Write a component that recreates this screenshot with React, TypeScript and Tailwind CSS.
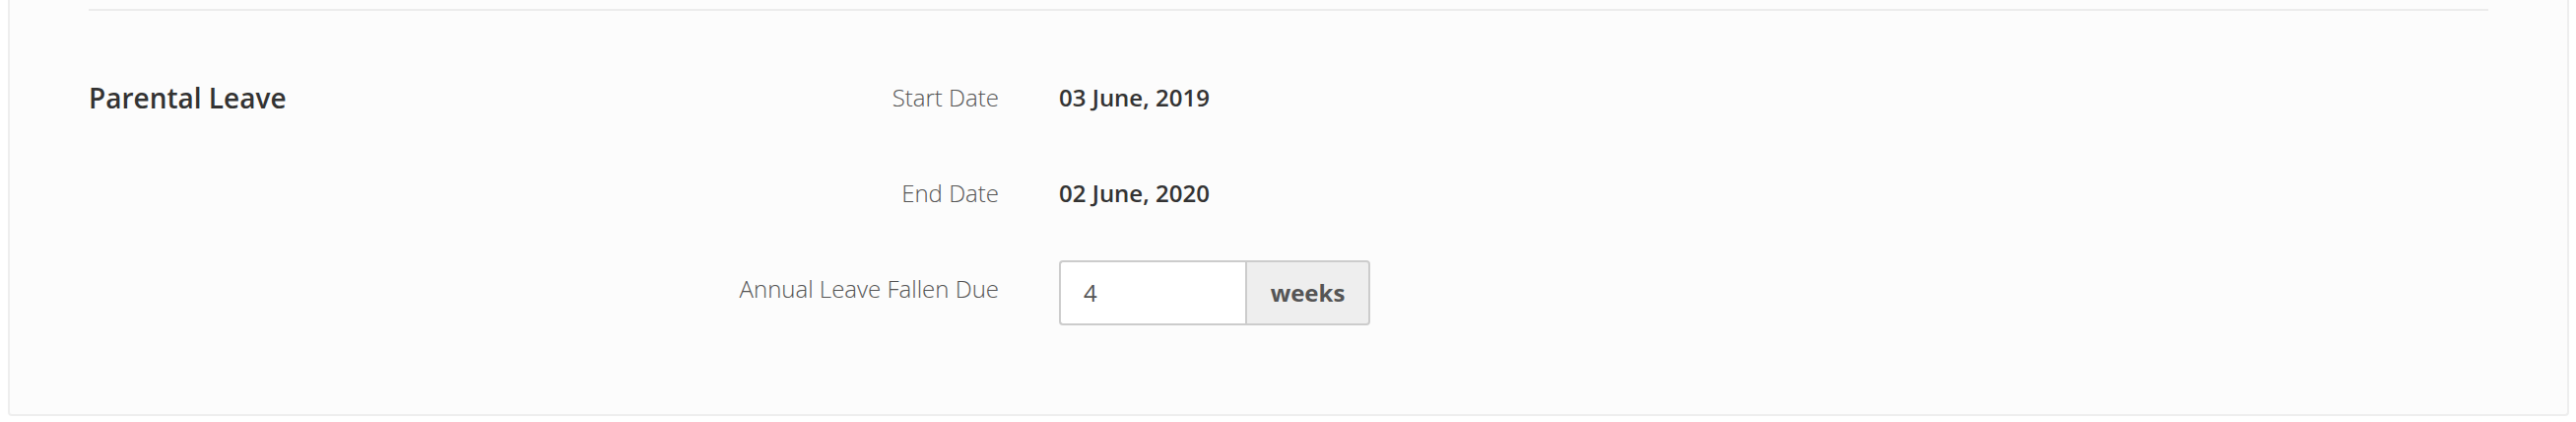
import React from 'react';

const font = { fontFamily: '"Open Sans", "Noto Sans", sans-serif' };

interface RowProps {
  label: string;
  children: React.ReactNode;
}

const Row: React.FC<RowProps> = ({ label, children }) => (
  <div className="flex h-[97px] items-center">
    <div className="w-[624px] text-right text-[24px] leading-[34px] font-light text-[#555]">
      {label}
    </div>
    <div className="ml-[61px] flex items-center">{children}</div>
  </div>
);

const Value: React.FC<{ text: string }> = ({ text }) => (
  <span className="text-[24px] leading-[34px] font-semibold text-[#333]">{text}</span>
);

export default function App() {
  return (
    <div className="min-h-screen bg-white" style={font}>
      <div className="ml-[8px] w-[2600px] rounded-b-[4px] border-x-2 border-b-2 border-[#eeeeee] bg-[#fcfcfc] px-[80px] pt-[9px] pb-[79px]">
        <div className="h-[2px] bg-[#ececec]" />
        <div className="mt-[39px] flex">
          <div className="w-[300px]">
            <div className="flex h-[97px] items-center">
              <h3 className="text-[28px] leading-[38px] font-semibold text-[#333]">Parental Leave</h3>
            </div>
          </div>
          <div className="flex-1">
            <Row label="Start Date">
              <Value text="03 June, 2019" />
            </Row>
            <Row label="End Date">
              <Value text="02 June, 2020" />
            </Row>
            <Row label="Annual Leave Fallen Due">
              <div className="mt-[8px] flex h-[66px]">
                <input
                  type="text"
                  defaultValue="4"
                  className="h-[66px] w-[189px] rounded-l-[4px] border-2 border-r-0 border-[#cccccc] bg-white pl-[23px] text-[24px] text-[#555] outline-none"
                  style={font}
                />
                <span className="flex h-[66px] w-[127px] items-center justify-center rounded-r-[4px] border-2 border-[#cccccc] bg-[#eeeeee] text-[24px] font-bold text-[#555]">
                  weeks
                </span>
              </div>
            </Row>
          </div>
        </div>
      </div>
    </div>
  );
}
